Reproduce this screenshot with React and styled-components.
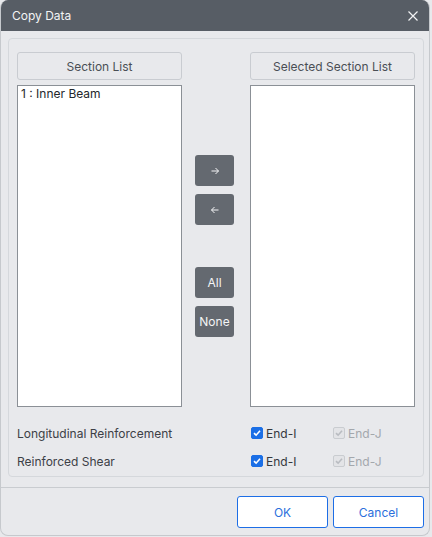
import React from "react";
import styled, { createGlobalStyle } from "styled-components";

const GlobalStyle = createGlobalStyle`
  html, body {
    margin: 0;
    padding: 0;
    background: #e8e9ec;
    font-family: Inter, "Noto Sans", sans-serif;
  }
`;

const Dialog = styled.div`
  width: 430px;
  height: 536px;
  box-sizing: border-box;
  background: #e8e9ec;
  border: 1px solid #c6c9cd;
  border-top: none;
  border-radius: 8px;
  overflow: hidden;
  display: flex;
  flex-direction: column;
  font-size: 12px;
`;

const TitleBar = styled.div`
  height: 31px;
  flex: none;
  background: #575d65;
  color: #f2f3f4;
  display: flex;
  align-items: center;
  justify-content: space-between;
  padding: 0 9px 0 11px;
`;

const CloseButton = styled.button`
  border: none;
  background: transparent;
  padding: 0;
  width: 14px;
  height: 14px;
  display: flex;
  align-items: center;
  justify-content: center;
  cursor: pointer;
`;

const Body = styled.div`
  flex: 1;
  padding: 7px 5px 0 7px;
`;

const GroupBox = styled.div`
  box-sizing: border-box;
  height: 439px;
  border: 1px solid #d5d8dc;
  border-radius: 4px;
  padding: 13px 8px 0 8px;
`;

const Columns = styled.div`
  display: grid;
  grid-template-columns: 165px 1fr 165px;
`;

const ListColumn = styled.div`
  display: flex;
  flex-direction: column;
  gap: 5px;
`;

const ListHeader = styled.div`
  height: 28px;
  box-sizing: border-box;
  border: 1px solid #c9ccd1;
  border-radius: 3px;
  background: #e8e9ec;
  color: #4a4f55;
  display: flex;
  align-items: center;
  justify-content: center;
`;

const ListBox = styled.div`
  height: 322px;
  box-sizing: border-box;
  border: 1px solid #8b9096;
  background: #fff;
  padding: 0 3px;
  color: #24272b;
`;

const ListItem = styled.div`
  line-height: 16px;
`;

const Middle = styled.div`
  display: flex;
  flex-direction: column;
  align-items: flex-start;
  padding-top: 103px;
  padding-left: 13px;
`;

const Group = styled.div`
  display: flex;
  flex-direction: column;
  gap: 8px;
  margin-bottom: ${(p) => p.$spacing || 0}px;
`;

const MoveButton = styled.button`
  width: 39px;
  height: 31px;
  border: none;
  border-radius: 3px;
  background: #646970;
  color: #f4f5f6;
  font-family: inherit;
  font-size: 12px;
  padding: 0;
  display: flex;
  align-items: center;
  justify-content: center;
`;

const Options = styled.div`
  margin-top: 12px;
`;

const OptionRow = styled.div`
  height: 28px;
  display: grid;
  grid-template-columns: 234px 82px 1fr;
  align-items: center;
  color: #3c4046;
`;

const Check = styled.label`
  display: flex;
  align-items: center;
  gap: 3px;
  color: ${(p) => (p.$disabled ? "#a3a7ac" : "#34373c")};
`;

const Box = styled.span`
  width: 12px;
  height: 12px;
  box-sizing: border-box;
  border-radius: 2px;
  display: flex;
  align-items: center;
  justify-content: center;
  background: ${(p) => (p.$disabled ? "#e3e4e7" : "#1b6fe6")};
  border: 1px solid ${(p) => (p.$disabled ? "#c9ccd0" : "#1b6fe6")};
`;

const Footer = styled.div`
  flex: none;
  border-top: 1px solid #c9ccd0;
  margin-top: 10px;
  padding: 8px 5px 8px 0;
  display: flex;
  justify-content: flex-end;
  gap: 5px;
`;

const FooterButton = styled.button`
  width: 91px;
  height: 32px;
  background: #fff;
  border: 1px solid #1d6ee6;
  border-radius: 3px;
  color: #2b6fdc;
  font-family: inherit;
  font-size: 12px;
`;

const Arrow = ({ dir }) => (
  <svg width="10" height="8" viewBox="0 0 10 8">
    <g
      fill="none"
      stroke="#f4f5f6"
      strokeWidth="1"
      transform={dir === "left" ? "translate(10 0) scale(-1 1)" : undefined}
    >
      <path d="M1.5 4H8.5" />
      <path d="M5.5 1L8.5 4L5.5 7" />
    </g>
  </svg>
);

const Tick = ({ color }) => (
  <svg width="10" height="10" viewBox="0 0 10 10">
    <path d="M2 5.2L4.1 7.2L8 2.8" fill="none" stroke={color} strokeWidth="1.6" />
  </svg>
);

const CheckItem = ({ label, disabled }) => (
  <Check $disabled={disabled}>
    <Box $disabled={disabled}>
      <Tick color={disabled ? "#b9bcc1" : "#fff"} />
    </Box>
    {label}
  </Check>
);

const options = ["Longitudinal Reinforcement", "Reinforced Shear"];

export default function App() {
  return (
    <>
      <GlobalStyle />
      <Dialog>
        <TitleBar>
          <span>Copy Data</span>
          <CloseButton>
            <svg width="10" height="10" viewBox="0 0 10 10">
              <path d="M0.5 0.5L9.5 9.5M9.5 0.5L0.5 9.5" stroke="#f2f3f4" strokeWidth="1.2" />
            </svg>
          </CloseButton>
        </TitleBar>
        <Body>
          <GroupBox>
            <Columns>
              <ListColumn>
                <ListHeader>Section List</ListHeader>
                <ListBox>
                  <ListItem>1 : Inner Beam</ListItem>
                </ListBox>
              </ListColumn>
              <Middle>
                <Group $spacing={42}>
                  <MoveButton>
                    <Arrow dir="right" />
                  </MoveButton>
                  <MoveButton>
                    <Arrow dir="left" />
                  </MoveButton>
                </Group>
                <Group>
                  <MoveButton>All</MoveButton>
                  <MoveButton>None</MoveButton>
                </Group>
              </Middle>
              <ListColumn>
                <ListHeader>Selected Section List</ListHeader>
                <ListBox />
              </ListColumn>
            </Columns>
            <Options>
              {options.map((o) => (
                <OptionRow key={o}>
                  <span>{o}</span>
                  <CheckItem label="End-I" />
                  <CheckItem label="End-J" disabled />
                </OptionRow>
              ))}
            </Options>
          </GroupBox>
        </Body>
        <Footer>
          <FooterButton>OK</FooterButton>
          <FooterButton>Cancel</FooterButton>
        </Footer>
      </Dialog>
    </>
  );
}
